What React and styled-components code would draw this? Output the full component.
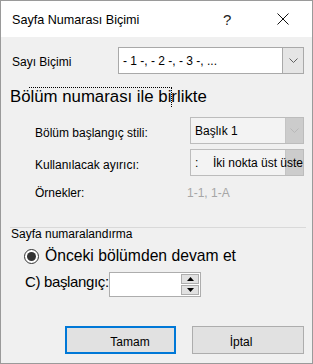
import React from "react";
import styled, { createGlobalStyle } from "styled-components";

const GlobalStyle = createGlobalStyle`
  html, body {
    margin: 0;
    padding: 0;
    background: #ffffff;
  }
  body {
    font-family: "Liberation Sans", Arial, sans-serif;
    color: #000;
  }
`;

const Window = styled.div`
  width: 313px;
  height: 364px;
  box-sizing: border-box;
  border: 1px solid #9a9a9a;
  background: #f0f0f0;
  display: flex;
  flex-direction: column;
`;

const TitleBar = styled.div`
  height: 36px;
  background: #ffffff;
  display: flex;
  align-items: center;
  padding-left: 11px;
`;

const Title = styled.div`
  flex: 1;
  font-size: 12.6px;
  margin-top: 1px;
`;

const HelpGlyph = styled.div`
  width: 50px;
  font-size: 15px;
  font-weight: 300;
  color: #222;
`;

const CloseButton = styled.div`
  width: 39px;
  height: 36px;
  display: flex;
  align-items: center;
  padding-left: 4px;
  box-sizing: border-box;
`;

const Body = styled.div`
  flex: 1;
  display: flex;
  flex-direction: column;
  padding-top: 10px;
`;

const Row = styled.div`
  display: flex;
  align-items: center;
  height: ${(p) => p.$h || 27}px;
  margin-top: ${(p) => p.$top || 0}px;
  padding-left: ${(p) => p.$indent || 0}px;
`;

const Label = styled.div`
  width: ${(p) => p.$w}px;
  flex-shrink: 0;
  font-size: 12px;
  padding-top: ${(p) => p.$drop || 0}px;
  white-space: nowrap;
`;

const Combo = styled.div`
  width: ${(p) => p.$w}px;
  height: 27px;
  box-sizing: border-box;
  border: 1px solid ${(p) => (p.$disabled ? "#bcbcbc" : "#a9a9a9")};
  background: ${(p) => (p.$disabled ? "#f3f3f3" : "#ffffff")};
  display: flex;
  position: relative;
`;

const ComboText = styled.div`
  flex: 1;
  font-size: 12px;
  padding-left: 4px;
  display: flex;
  align-items: center;
  white-space: nowrap;
  z-index: 1;
`;

const Separator = styled.span`
  width: 18px;
  flex-shrink: 0;
`;

const ComboButton = styled.div`
  width: ${(p) => p.$w || 20}px;
  flex-shrink: 0;
  border-left: 1px solid ${(p) => (p.$disabled ? "#c4c4c4" : "#a9a9a9")};
  background: ${(p) => (p.$disabled ? "#cccccc" : "#e5e5e5")};
  display: flex;
  align-items: center;
  justify-content: center;
`;

const OverlayButton = styled(ComboButton)`
  position: absolute;
  right: 0;
  top: 0;
  bottom: 0;
`;

const Header = styled.div`
  position: relative;
  height: 19px;
  line-height: 19px;
  margin-top: 13px;
  padding-left: 9px;
  font-size: 16.8px;
`;

const FocusRect = styled.div`
  position: absolute;
  left: 28px;
  top: 0;
  width: 142px;
  height: 19px;
  border-top: 1px dotted #000;
  border-right: 1px dotted #000;
`;

const ExampleValue = styled.div`
  font-size: 12px;
  color: #a6a6a6;
`;

const GroupLine = styled.div`
  height: 1px;
  background: #d9d9d9;
  margin: 27px 6px 0 9px;
`;

const GroupLabel = styled.div`
  font-size: 12px;
  padding-left: 10px;
  line-height: 13px;
`;

const RadioCircle = styled.div`
  width: 15px;
  height: 15px;
  box-sizing: border-box;
  border: 1px solid #333;
  border-radius: 50%;
  background: #fff;
  display: flex;
  align-items: center;
  justify-content: center;
  margin-right: 6px;
  &::after {
    content: "";
    width: 9px;
    height: 9px;
    border-radius: 50%;
    background: #333;
  }
`;

const BigText = styled.div`
  font-size: ${(p) => p.$size || 16}px;
  letter-spacing: ${(p) => p.$ls || 0}px;
  white-space: nowrap;
  margin-bottom: ${(p) => p.$lift || 0}px;
`;

const SpinBox = styled.div`
  width: 92px;
  height: 25px;
  box-sizing: border-box;
  border: 1px solid #adadad;
  background: #fff;
  display: flex;
  justify-content: flex-end;
  align-items: center;
  padding-right: 1px;
  flex-shrink: 0;
  margin-left: auto;
  margin-right: 111px;
`;

const SpinButtons = styled.div`
  width: 18px;
  display: flex;
  flex-direction: column;
  gap: 1px;
`;

const SpinButton = styled.div`
  height: 10px;
  box-sizing: border-box;
  border: 1px solid #adadad;
  background: #e1e1e1;
  display: flex;
  align-items: center;
  justify-content: center;
`;

const ButtonRow = styled.div`
  display: flex;
  gap: 16px;
  padding-left: 64px;
  margin-top: 29px;
`;

const DialogButton = styled.div`
  width: ${(p) => p.$w}px;
  height: 28px;
  box-sizing: border-box;
  border: ${(p) => (p.$primary ? "2px solid #0078d7" : "1px solid #adadad")};
  background: #e1e1e1;
  font-size: 12px;
  display: flex;
  align-items: center;
  justify-content: center;
  padding-left: ${(p) => (p.$shift > 0 ? p.$shift : 0)}px;
  padding-right: ${(p) => (p.$shift < 0 ? -p.$shift : 0)}px;
  padding-top: 3px;
`;

const Chevron = ({ color }) => (
  <svg width="9" height="5" viewBox="0 0 9 5">
    <path d="M0.5 0.5 L4.5 4.5 L8.5 0.5" fill="none" stroke={color} strokeWidth="1" />
  </svg>
);

const Arrow = ({ up }) => (
  <svg width="7" height="4" viewBox="0 0 7 4">
    <path d={up ? "M0 4 L3.5 0 L7 4 Z" : "M0 0 L3.5 4 L7 0 Z"} fill="#000" />
  </svg>
);

const CloseIcon = () => (
  <svg width="12" height="12" viewBox="0 0 12 12">
    <path d="M0.5 0.5 L11.5 11.5 M11.5 0.5 L0.5 11.5" stroke="#111" strokeWidth="1" fill="none" />
  </svg>
);

export default function App() {
  return (
    <>
      <GlobalStyle />
      <Window>
        <TitleBar>
          <Title>Sayfa Numarası Biçimi</Title>
          <HelpGlyph>?</HelpGlyph>
          <CloseButton>
            <CloseIcon />
          </CloseButton>
        </TitleBar>
        <Body>
          <Row $indent={11}>
            <Label $w={106} $drop={2}>Sayı Biçimi</Label>
            <Combo $w={186}>
              <ComboText>- 1 -, - 2 -, - 3 -, ...</ComboText>
              <ComboButton $w={20}>
                <Chevron color="#606060" />
              </ComboButton>
            </Combo>
          </Row>

          <Header>
            Bölüm numarası ile birlikte
            <FocusRect />
          </Header>

          <Row $indent={34} $top={11}>
            <Label $w={155} $drop={4}>Bölüm başlangıç stili:</Label>
            <Combo $w={114} $disabled>
              <ComboText>Başlık 1</ComboText>
              <ComboButton $w={17} $disabled>
                <Chevron color="#b8b8b8" />
              </ComboButton>
            </Combo>
          </Row>

          <Row $indent={34} $top={5}>
            <Label $w={155} $drop={4}>Kullanılacak ayırıcı:</Label>
            <Combo $w={114} $disabled>
              <OverlayButton $w={17} $disabled>
                <Chevron color="#b8b8b8" />
              </OverlayButton>
              <ComboText>
                <Separator>:</Separator>
                İki nokta üst üste
              </ComboText>
            </Combo>
          </Row>

          <Row $indent={34} $top={10} $h={14}>
            <Label $w={152}>Örnekler:</Label>
            <ExampleValue>1-1, 1-A</ExampleValue>
          </Row>

          <GroupLine />
          <GroupLabel>Sayfa numaralandırma</GroupLabel>

          <Row $indent={23} $top={5} $h={20}>
            <RadioCircle />
            <BigText $size={15.7}>Önceki bölümden devam et</BigText>
          </Row>

          <Row $indent={24} $top={6} $h={25}>
            <BigText $size={15} $ls={-0.35} $lift={6}>C) başlangıç:</BigText>
            <SpinBox>
              <SpinButtons>
                <SpinButton>
                  <Arrow up />
                </SpinButton>
                <SpinButton>
                  <Arrow />
                </SpinButton>
              </SpinButtons>
            </SpinBox>
          </Row>

          <ButtonRow>
            <DialogButton $w={111} $primary $shift={19}>Tamam</DialogButton>
            <DialogButton $w={112} $shift={-14}>İptal</DialogButton>
          </ButtonRow>
        </Body>
      </Window>
    </>
  );
}
